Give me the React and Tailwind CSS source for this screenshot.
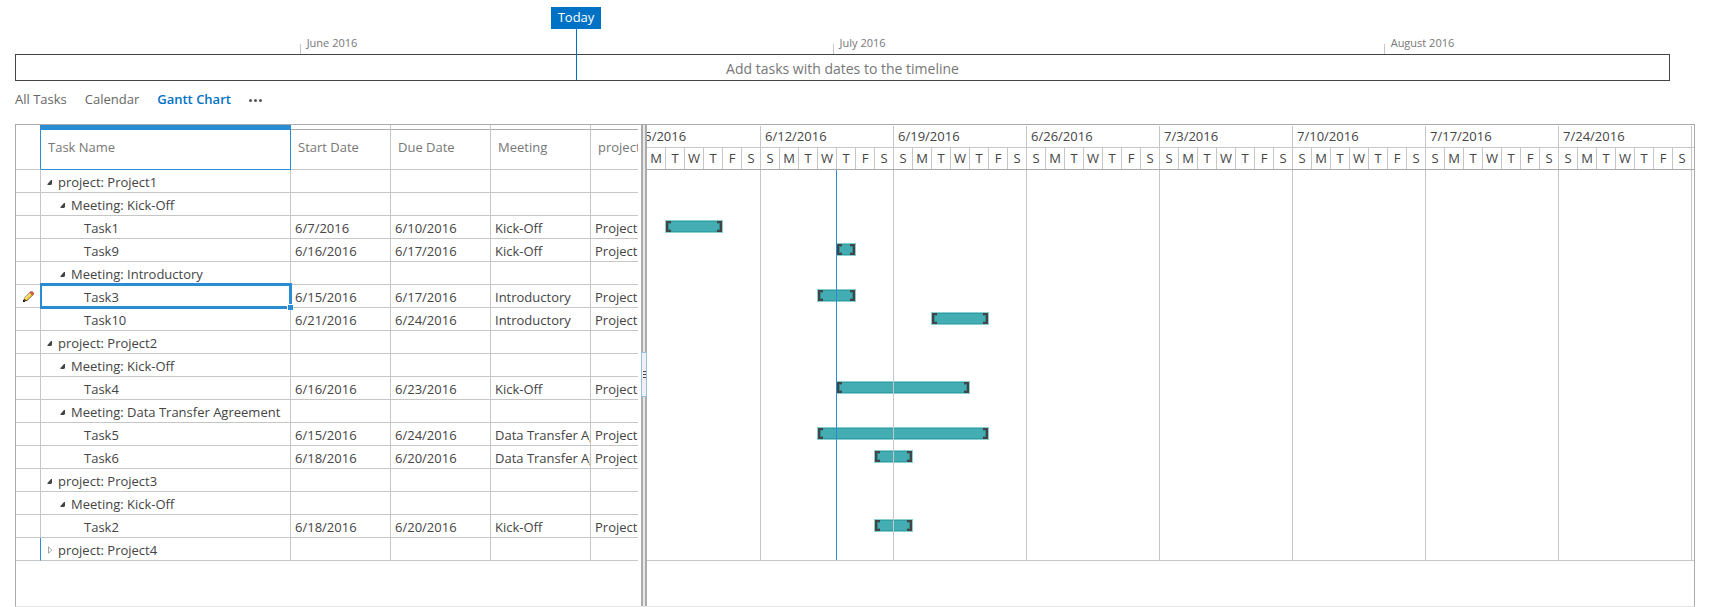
const start = Date.UTC(2016, 5, 5);
const dayOf = (s) => {
  const [m, d] = s.split("/").map(Number);
  return Math.round((Date.UTC(2016, m - 1, d) - start) / 86400000);
};

const DAY = 19;
const WEEKS = ["6/5/2016", "6/12/2016", "6/19/2016", "6/26/2016", "7/3/2016", "7/10/2016", "7/17/2016", "7/24/2016"];
const DAYS = ["S", "M", "T", "W", "T", "F", "S"];

const project = (name, closed) => ({ level: 0, name: "project: " + name, closed });
const meeting = (name) => ({ level: 1, name: "Meeting: " + name });
const task = (name, from, to, kind, proj, editing) => ({ level: 2, name, from, to, kind, proj, editing });

const ROWS = [
  project("Project1"),
  meeting("Kick-Off"),
  task("Task1", "6/7/2016", "6/10/2016", "Kick-Off", "Project1"),
  task("Task9", "6/16/2016", "6/17/2016", "Kick-Off", "Project1"),
  meeting("Introductory"),
  task("Task3", "6/15/2016", "6/17/2016", "Introductory", "Project1", true),
  task("Task10", "6/21/2016", "6/24/2016", "Introductory", "Project1"),
  project("Project2"),
  meeting("Kick-Off"),
  task("Task4", "6/16/2016", "6/23/2016", "Kick-Off", "Project2"),
  meeting("Data Transfer Agreement"),
  task("Task5", "6/15/2016", "6/24/2016", "Data Transfer Agreement", "Project2"),
  task("Task6", "6/18/2016", "6/20/2016", "Data Transfer Agreement", "Project2"),
  project("Project3"),
  meeting("Kick-Off"),
  task("Task2", "6/18/2016", "6/20/2016", "Kick-Off", "Project3"),
  project("Project4", true),
];

const INDENT = ["pl-[6px]", "pl-[19px]", "pl-[43px]"];

function Pencil() {
  return (
    <svg className="mx-auto block" width="11" height="11" viewBox="0 0 11 11" aria-hidden="true">
      <path d="M.5 10.5 L1 7 L7.5 .5 H9.5 L10.7 2 V3.5 L4 10 Z" fill="#5a4a2a" />
      <path d="M1.2 7.8 L7 2 L9.2 4.2 L3.8 9.3 Z" fill="#f8cf45" />
      <path d="M1.2 7.6 L7 2 L7.8 2.8 L2.2 8.2 Z" fill="#fde98a" />
      <path d="M7 1.8 L8 .6 H9.4 L10.5 2 V3.2 L9.4 4.4 Z" fill="#e8573f" />
      <path d="M0 11 V8.6 L2.4 11 Z" fill="#111" />
    </svg>
  );
}

function Toggle({ closed, label }) {
  return (
    <button type="button" aria-label={(closed ? "Expand " : "Collapse ") + label} className="block h-[8px] w-[8px] shrink-0">
      <svg width="8" height="8" viewBox="0 0 8 8" className="block">
        {closed ? (
          <path d="M1.5 .8 L4.8 4 L1.5 7.2 Z" fill="#fff" stroke="#a6a6a6" />
        ) : (
          <path d="M5 2 V6 L4 7 H.5 V6 L4 2 Z" fill="#444" />
        )}
      </svg>
    </button>
  );
}

function Bar({ from, to }) {
  const a = dayOf(from);
  const b = dayOf(to);
  return (
    <div
      className="absolute top-[4px] h-[13px] border border-[#8ccfd1] bg-[#43adb3]"
      style={{ left: a * DAY - 1, width: (b - a) * DAY + 1 }}
    >
      <div className="flex h-full justify-between border-y border-[#2f9fa5]">
        <svg width="6" height="11" viewBox="0 0 6 11" className="-my-px block">
          <path d="M2 2H5V3H3V8H5V9H2Z" fill="#328a8f" />
          <path d="M0 0H5V2H2V9H5V11H0Z" fill="#444" />
        </svg>
        <svg width="6" height="11" viewBox="0 0 6 11" className="-my-px block">
          <path d="M4 2H1V3H3V8H1V9H4Z" fill="#328a8f" />
          <path d="M6 0H1V2H4V9H1V11H6Z" fill="#444" />
        </svg>
      </div>
    </div>
  );
}

function Timeline() {
  return (
    <section aria-label="Timeline" className="relative ml-[15px] mr-[45px] pt-[36px]">
      <div className="flex h-[18px] text-[11px] leading-[13px] text-[#777]">
        <div className="w-[17.2%]" />
        <div className="flex w-[32.2%]"><span className="mt-[8px] border-l border-[#c6c6c6]" /><span className="pl-[6px]">June 2016</span></div>
        <div className="flex w-[33.3%]"><span className="mt-[8px] border-l border-[#c6c6c6]" /><span className="pl-[6px]">July 2016</span></div>
        <div className="flex"><span className="mt-[8px] border-l border-[#c6c6c6]" /><span className="pl-[6px]">August 2016</span></div>
      </div>
      <div className="h-[27px] border border-[#444] text-center text-[14px] leading-[27px] text-[#777]">
        Add tasks with dates to the timeline
      </div>
      <div className="absolute bottom-px left-[33.9%] top-[7px] flex -translate-x-1/2 flex-col items-center">
        <span className="h-[22px] w-[50px] bg-[#0072c6] text-center text-[13px] leading-[21px] text-white">Today</span>
        <span className="w-px flex-1 bg-[#0072c6]" />
      </div>
    </section>
  );
}

function TaskTable() {
  return (
    <div className="w-[622px] shrink-0 overflow-hidden">
      <table className="w-[675px] table-fixed border-separate border-spacing-0 text-left">
        <colgroup>
          <col className="w-[25px]" />
          <col className="w-[250px]" />
          <col className="w-[100px]" />
          <col className="w-[100px]" />
          <col className="w-[100px]" />
          <col className="w-[100px]" />
        </colgroup>
        <thead>
          <tr className="h-[45px] text-[#777]">
            <th aria-label="Row status" className="border-b border-r border-b-[#c6c6c6] border-r-[#2a8dd4] p-0" />
            <th className="border-b border-r border-t-[5px] border-[#2a8dd4] p-0 pl-[7px] align-top font-normal leading-[34px]">Task Name</th>
            {["Start Date", "Due Date", "Meeting", "project"].map((h) => (
              <th key={h} className="border-b border-r border-[#c6c6c6] p-0 align-top font-normal">
                <div className="h-[5px] border-b border-[#ababab]" />
                <div className="pl-[7px] leading-[34px]">{h}</div>
              </th>
            ))}
          </tr>
        </thead>
        <tbody>
          {ROWS.map((r, i) => (
            <tr key={i} className="h-[23px]">
              <td className={"border-b border-r border-b-[#c6c6c6] p-0 " + (r.closed ? "border-r-[#2a8dd4]" : "border-r-[#c6c6c6]")}>
                {r.editing && <Pencil />}
              </td>
              <td className="relative border-b border-r border-[#c6c6c6] p-0">
                <div className={"flex items-center gap-[3px] whitespace-nowrap pt-[2px] leading-[20px] " + INDENT[r.level]}>
                  {r.level < 2 && <Toggle closed={r.closed} label={r.name} />}
                  {r.name}
                </div>
                {r.editing && (
                  <div className="absolute -bottom-[2px] -left-px -right-[2px] -top-[2px] z-10 border-[3px] border-l-2 border-[#2a8dd4]">
                    <span className="absolute -bottom-[4px] -right-[4px] h-[6px] w-[6px] border-l border-t border-white bg-[#2a8dd4]" />
                  </div>
                )}
              </td>
              {[r.from, r.to, r.kind, r.proj].map((c, k) => (
                <td key={k} className="overflow-hidden whitespace-nowrap border-b border-r border-[#c6c6c6] p-0 pl-[4px] pt-[2px] leading-[20px]">
                  {c}
                </td>
              ))}
            </tr>
          ))}
        </tbody>
      </table>
    </div>
  );
}

function Chart() {
  return (
    <div className="min-w-0 flex-1 overflow-hidden">
      <div className="-ml-[19px]">
        <div className="flex border-b border-[#ababab] pt-px">
          {WEEKS.map((w) => (
            <div key={w} className="w-[133px] shrink-0">
              <div className="h-[22px] border-b border-r border-[#c6c6c6] pl-[4px] leading-[20px]">{w}</div>
              <div className="flex h-[21px]">
                {DAYS.map((d, i) => (
                  <span key={i} className="w-[19px] border-r border-[#c6c6c6] text-center leading-[21px]">{d}</span>
                ))}
              </div>
            </div>
          ))}
          <div className="h-[22px] flex-1 border-b border-[#c6c6c6]" />
        </div>
        <div className="relative border-b border-[#c6c6c6]">
          {ROWS.map((r, i) => (
            <div key={i} className={i === ROWS.length - 1 ? "relative h-[22px]" : "relative h-[23px]"}>
              {r.from && <Bar from={r.from} to={r.to} />}
            </div>
          ))}
          <div className="absolute inset-0 flex">
            {WEEKS.map((w) => (
              <div key={w} className="w-[133px] shrink-0 border-r border-[#c6c6c6]" />
            ))}
          </div>
          <div className="absolute inset-y-0 w-px bg-[#2a8dd4]" style={{ left: dayOf("6/16/2016") * DAY - 1 }} />
        </div>
      </div>
    </div>
  );
}

export default function App() {
  return (
    <main className="flex min-h-screen flex-col bg-white font-['Open_Sans','Noto_Sans',sans-serif] text-[13px] text-[#444]">
      <Timeline />
      <nav className="flex h-[43px] items-start gap-[18px] pl-[15px] pt-[9px] leading-[18px] text-[#666]">
        <a href="#all">All Tasks</a>
        <a href="#calendar">Calendar</a>
        <a href="#gantt" aria-current="page" className="font-semibold text-[#0072c6]">Gantt Chart</a>
        <button type="button" aria-label="More views" className="flex h-[20px] items-center gap-[2px]">
          <span className="h-[3px] w-[3px] rounded-full bg-[#555]" />
          <span className="h-[3px] w-[3px] rounded-full bg-[#555]" />
          <span className="h-[3px] w-[3px] rounded-full bg-[#555]" />
        </button>
      </nav>
      <section aria-label="Gantt chart" className="ml-[15px] mr-[20px] flex flex-1 border border-[#ababab] border-b-[#e6e6e6]">
        <TaskTable />
        <div className="relative ml-[3px] w-[6px] shrink-0 border-x-2 border-[#ababab] bg-[#e8e8e8]">
          <button type="button" aria-label="Resize panes" className="absolute -left-[2px] top-[227px] flex h-[45px] w-[6px] flex-col items-center justify-center gap-[2px] border border-[#92c0e0] bg-[#f0f0f0]">
            <span className="h-px w-[3px] shrink-0 bg-[#444]" />
            <span className="h-px w-[3px] shrink-0 bg-[#444]" />
            <span className="h-px w-[3px] shrink-0 bg-[#444]" />
          </button>
        </div>
        <Chart />
      </section>
    </main>
  );
}
